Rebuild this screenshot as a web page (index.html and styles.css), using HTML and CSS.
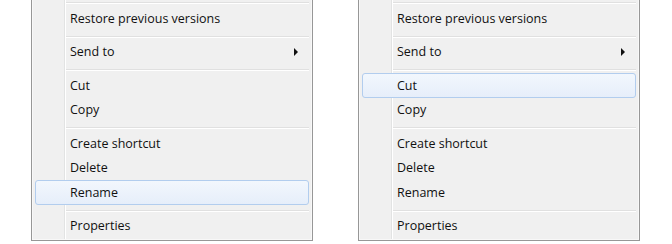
FILE: index.html
```html
<!DOCTYPE html>
<html lang="en">
<head>
  <meta charset="UTF-8" />
  <title>Context menu hover</title>
  <link rel="stylesheet" href="styles.css">
</head>
<body>

  <div class="stage">
    <ul class="menu">
      <li class="sep"></li>
      <li class="item">Restore previous versions</li>
      <li class="sep"></li>
      <li class="item has-sub">Send to <span class="arrow"></span></li>
      <li class="sep"></li>
      <li class="item">Cut</li>
      <li class="item">Copy</li>
      <li class="sep"></li>
      <li class="item">Create shortcut</li>
      <li class="item">Delete</li>
      <li class="item hot">Rename</li>
      <li class="sep"></li>
      <li class="item">Properties</li>
    </ul>

    <ul class="menu">
      <li class="sep"></li>
      <li class="item">Restore previous versions</li>
      <li class="sep"></li>
      <li class="item has-sub">Send to <span class="arrow"></span></li>
      <li class="sep"></li>
      <li class="item hot">Cut</li>
      <li class="item">Copy</li>
      <li class="sep"></li>
      <li class="item">Create shortcut</li>
      <li class="item">Delete</li>
      <li class="item">Rename</li>
      <li class="sep"></li>
      <li class="item">Properties</li>
    </ul>
  </div>

</body>
</html>
```

FILE: styles.css
```css
* {
  box-sizing: border-box;
  margin: 0;
  padding: 0;
}

body {
  background: #fff;
  font-family: 'Open Sans', 'Liberation Sans', sans-serif;
  font-size: 12.5px;
  color: #111;
  overflow: hidden;
}

.stage {
  display: flex;
  gap: 45px;
  padding-left: 31px;
}

.menu {
  list-style: none;
  width: 282px;
  margin-top: -3px;
  padding-bottom: 2px;
  border: 1px solid #979797;
  border-top: none;
  background-color: #f0f0f0;
  /* icon gutter line */
  background-image: linear-gradient(to right,
    transparent 32px, #e2e3e3 32px, #e2e3e3 33px,
    #ffffff 33px, #ffffff 34px, transparent 34px);
  box-shadow: inset 1px 0 0 #f8f8f8, inset -1px 0 0 #f8f8f8, inset 0 -1px 0 #f8f8f8;
}

.sep {
  height: 9px;
  margin: 0 3px 0 34px;
  padding-top: 5px;
}

.sep::before {
  content: "";
  display: block;
  height: 1px;
  background: #e0e0e0;
  border-bottom: 1px solid #fff;
  box-sizing: content-box;
}

.item {
  display: flex;
  align-items: center;
  justify-content: space-between;
  height: 24.5px;
  margin: 0 3px;
  padding: 0 10px 0 34px;
  border: 1px solid transparent;
  border-radius: 3px;
  white-space: nowrap;
}

.item.hot {
  border-color: #b2cdee;
  background: linear-gradient(#f2f7fd, #e6eefa);
}

.arrow {
  width: 0;
  height: 0;
  border-left: 4px solid #111;
  border-top: 4px solid transparent;
  border-bottom: 4px solid transparent;
}
```
